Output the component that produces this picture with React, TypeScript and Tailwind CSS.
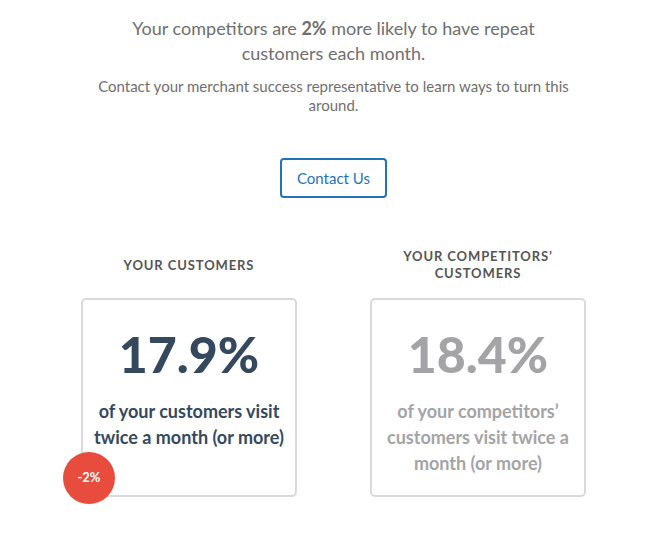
import React from 'react';

interface StatCardProps {
  label: string;
  value: string;
  text: string;
  muted?: boolean;
  delta?: string;
}

const StatCard: React.FC<StatCardProps> = ({ label, value, text, muted, delta }) => {
  const tone = muted ? 'text-[#a4a4a7]' : 'text-[#34495e]';
  return (
    <div className="flex w-[216px] flex-col items-center">
      {/* Label */}
      <div className="flex h-[34px] items-center text-center text-[13px] font-bold leading-[17px] tracking-[0.9px] text-[#555]">
        {label}
      </div>
      {/* Card */}
      <div className="relative mt-[16px] h-[199px] w-full rounded-[5px] border-2 border-[#dadada] px-[10px] pt-[29px] text-center">
        <div className={`text-[50px] font-black leading-[50px] ${tone}`}>{value}</div>
        <p className={`mt-[19px] text-[18px] font-bold leading-[26px] ${tone}`}>{text}</p>
        {delta && (
          <div className="absolute left-[-20px] top-[152px] flex h-[52px] w-[52px] items-center justify-center rounded-full bg-[#e74c3c] text-[13px] font-bold text-white">
            {delta}
          </div>
        )}
      </div>
    </div>
  );
};

const App: React.FC = () => {
  return (
    <div className="min-h-[534px] w-full bg-white pl-2 font-['Lato','Liberation_Sans',sans-serif]">
      <div className="mx-auto flex max-w-[490px] flex-col items-center pt-[16px] text-center">
        <h2 className="max-w-[470px] text-[18px] font-normal leading-[25px] text-[#6f6f6f]">
          Your competitors are <span className="font-bold">2%</span> more likely to have repeat customers each month.
        </h2>
        <p className="mt-[11px] text-[15px] leading-[19px] text-[#6f6f6f]">
          Contact your merchant success representative to learn ways to turn this around.
        </p>
        <button className="mt-[43px] h-[40px] w-[107px] rounded-[4px] border-2 border-[#1f73bd] text-[15px] text-[#1f73bd]">
          Contact Us
        </button>
      </div>

      <div className="mt-[50px] flex justify-center gap-[73px]">
        <StatCard
          label="YOUR CUSTOMERS"
          value="17.9%"
          text="of your customers visit twice a month (or more)"
          delta="-2%"
        />
        <StatCard
          label="YOUR COMPETITORS’ CUSTOMERS"
          value="18.4%"
          text="of your competitors’ customers visit twice a month (or more)"
          muted
        />
      </div>
    </div>
  );
};

export default App;
